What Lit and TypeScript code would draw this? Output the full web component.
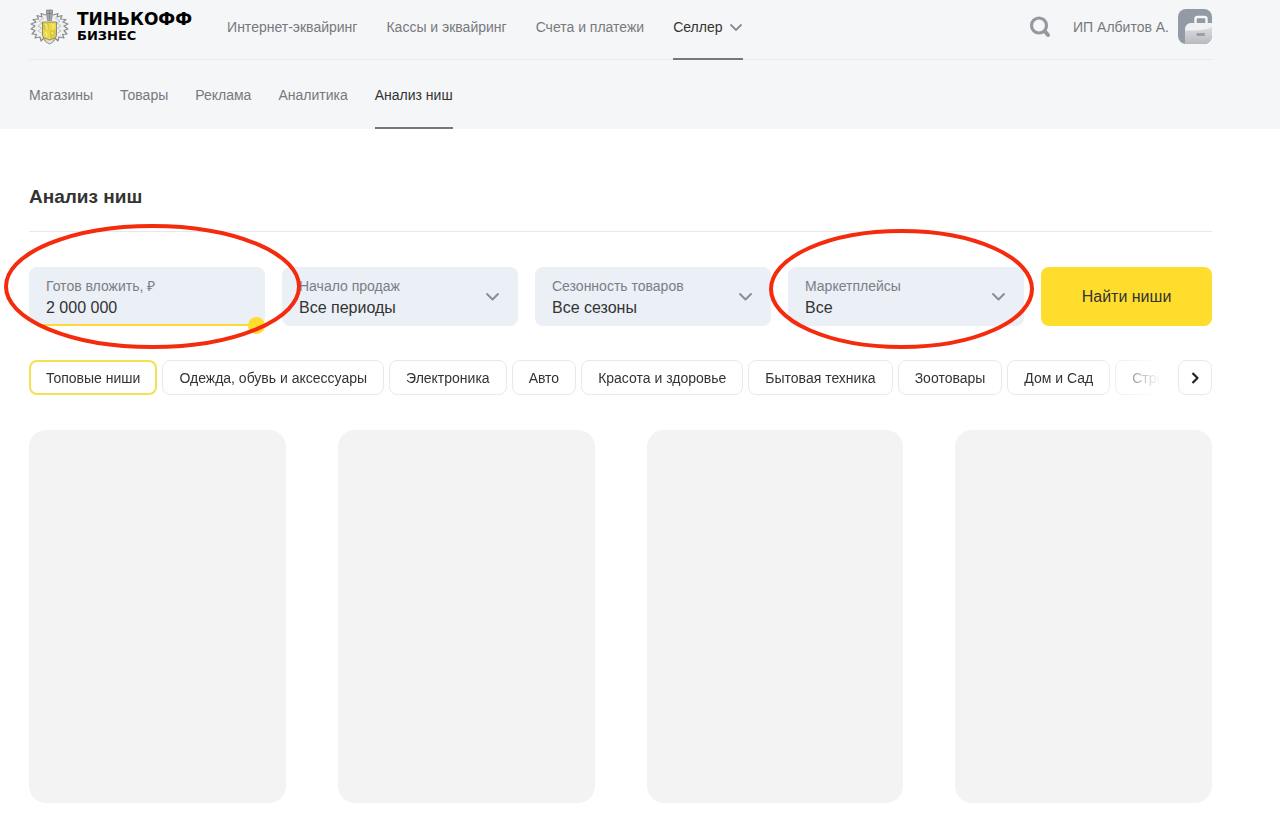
import { LitElement, html, css, svg } from "lit";
import { customElement, state } from "lit/decorators.js";
import { classMap } from "lit/directives/class-map.js";

const mainNav = ["Интернет-эквайринг", "Кассы и эквайринг", "Счета и платежи", "Селлер"];
const subNav = ["Магазины", "Товары", "Реклама", "Аналитика", "Анализ ниш"];
const categories = [
  "Топовые ниши",
  "Одежда, обувь и аксессуары",
  "Электроника",
  "Авто",
  "Красота и здоровье",
  "Бытовая техника",
  "Зоотовары",
  "Дом и Сад",
  "Строительство",
];
const filters = [
  { id: "start", label: "Начало продаж", value: "Все периоды", marked: false },
  { id: "season", label: "Сезонность товаров", value: "Все сезоны", marked: false },
  { id: "market", label: "Маркетплейсы", value: "Все", marked: true },
];

@customElement("brand-logo")
export class BrandLogo extends LitElement {
  static styles = css`
    :host {
      display: block;
    }
    .logo {
      display: flex;
      align-items: center;
      gap: 7px;
      color: #000;
      text-decoration: none;
    }
    .words {
      display: flex;
      flex-direction: column;
      font-family: "DejaVu Sans", sans-serif;
      font-weight: 700;
    }
    .name {
      font-size: 17px;
      line-height: 17px;
    }
    .unit {
      font-size: 13px;
      line-height: 15px;
    }
  `;

  render() {
    const wing = svg`
      <path d="M17 6 L12 4.500 L13 8 L8 6.500 L9.500 10 L4 10.500 L7 13 L2 15 L6 17 L2 20 L6 21.500 L3 25 L7.500 25.500 L6 29 L11 28 L12 32 L15 29"
        fill="#f0f0f1" stroke="#8a8c8f" stroke-width="1.200" stroke-linejoin="round" />
      <path d="M15 9 L10 12 L13 14 L9 17 L12.500 19 L9 22 L12.500 24"
        fill="none" stroke="#b4b6b9" stroke-width=".8" />
    `;
    return html`
      <a class="logo" href="#" aria-label="Тинькофф Бизнес">
        <svg width="41" height="36" viewBox="0 0 41 36" aria-hidden="true">
          ${wing}
          <g transform="translate(41 0) scale(-1 1)">${wing}</g>
          <path d="M17.500 1h6v3.500l-1 7h-4l-1-7z" fill="#a6a8ab" stroke="#808285" stroke-width=".8" />
          <path d="M20.500 1v9M18 4.500h5" stroke="#75777a" stroke-width=".7" />
          <path d="M14 29l3 4 3.500 2 3.500-2 3-4z" fill="#e3e4e5" stroke="#85878a" stroke-width=".9" />
          <path d="M13.500 13h14v13.500q0 2-2 2.500l-5 2-5-2q-2-.5-2-2.500z" fill="#ecd93f" stroke="#858068" stroke-width=".9" />
          <path d="M14 13.500h6v7h-6zM21 21.500h6v5l-6 3z" fill="#d9c845" />
          <path d="M16 15l2 1.500-1 2 2 1.500M22.500 15l2.500 2-1.500 3M16 23l2 2-1 3M22.500 23l2 2.500" fill="none" stroke="#f5eb9b" stroke-width="1.200" />
          <circle cx="16.500" cy="31.500" r="1" fill="#c9b548" />
          <circle cx="24.500" cy="31.500" r="1" fill="#c9b548" />
        </svg>
        <span class="words">
          <span class="name">ТИНЬКОФФ</span>
          <span class="unit">БИЗНЕС</span>
        </span>
      </a>
    `;
  }
}

@customElement("app-root")
export class AppRoot extends LitElement {
  static styles = css`
    :host {
      display: block;
      min-height: 100vh;
      background: #fff;
      color: #333;
      font-family: "Liberation Sans", Arial, sans-serif;
      font-size: 14px;
      line-height: 20px;
    }
    * {
      box-sizing: border-box;
    }
    button,
    input,
    select {
      font: inherit;
      color: inherit;
      margin: 0;
    }
    header {
      background: #f5f6f8;
      padding: 0 68px 0 29px;
    }
    .top {
      display: flex;
      height: 60px;
      border-bottom: 1px solid #eaebed;
    }
    .brand {
      margin: 9px 35px 0 0;
    }
    .nav {
      display: flex;
      gap: 27px;
    }
    .nav.main {
      gap: 29px;
    }
    .nav a {
      display: flex;
      gap: 6px;
      color: #77797d;
      text-decoration: none;
      white-space: nowrap;
    }
    .nav a.current {
      color: #333;
      border-bottom: 2px solid #75777b;
    }
    .main a {
      height: 60px;
      padding-top: 17px;
    }
    .main svg {
      margin-top: 3px;
    }
    .sub a {
      height: 69px;
      padding-top: 25px;
    }
    .account {
      display: flex;
      align-items: flex-start;
      margin-left: auto;
      padding-top: 9px;
      color: #77797d;
    }
    .icon-button {
      display: block;
      padding: 0;
      border: 0;
      background: none;
      cursor: pointer;
    }
    .search {
      margin: 7px 22px 0 0;
    }
    .user {
      margin: 8px 9px 0 0;
    }
    main {
      padding: 54px 68px 32px 29px;
    }
    h1 {
      margin: 0;
      padding-bottom: 20px;
      border-bottom: 1px solid #e7e8ea;
      font-size: 19px;
      line-height: 28px;
      font-weight: 700;
    }
    .filters {
      display: grid;
      grid-template-columns: repeat(4, 1fr) 171px;
      gap: 17px;
      margin-top: 35px;
    }
    .field {
      position: relative;
      display: grid;
      grid-template-columns: 1fr auto;
      align-content: start;
      align-items: center;
      height: 59px;
      padding: 9px 17px 0;
      border-radius: 8px;
      background: #ebeff6;
    }
    .field label {
      grid-column: 1;
      color: #7a7e86;
      line-height: 20px;
    }
    .field .value {
      grid-column: 1;
      width: 100%;
      height: 24px;
      padding: 0;
      border: 0;
      outline: 0;
      background: none;
      appearance: none;
      font-size: 16px;
      line-height: 24px;
    }
    .field .chevron {
      grid-column: 2;
      grid-row: 1 / 3;
    }
    .track {
      position: absolute;
      left: 8px;
      right: 8px;
      bottom: 0;
      height: 2px;
      background: #f9dc2d;
    }
    .thumb {
      position: absolute;
      right: 0;
      bottom: -8px;
      width: 17px;
      height: 17px;
      border-radius: 50%;
      background: #ffdd2d;
    }
    .mark {
      position: absolute;
      left: -26px;
      top: -44px;
      width: 299px;
      height: 127px;
      pointer-events: none;
      z-index: 1;
    }
    .mark.market {
      left: -20px;
      top: -39px;
      width: 267px;
      height: 122px;
    }
    .submit {
      border: 0;
      border-radius: 8px;
      background: #ffdd2d;
      font-size: 16px;
      cursor: pointer;
    }
    .categories {
      display: flex;
      gap: 17px;
      margin-top: 34px;
    }
    .chips {
      display: flex;
      flex: 1;
      gap: 5px;
      min-width: 0;
      overflow: hidden;
      mask-image: linear-gradient(to right, #000 calc(100% - 60px), transparent 100%);
    }
    .chip {
      flex: none;
      height: 35px;
      padding: 0 16px;
      border: 1px solid #e9e9eb;
      border-radius: 8px;
      background: #fff;
      white-space: nowrap;
      cursor: pointer;
    }
    .chip.selected {
      padding: 0 15px;
      border: 2px solid #f5e04f;
    }
    .next {
      display: grid;
      place-items: center;
      flex: none;
      width: 34px;
      height: 35px;
      padding: 0;
      border: 1px solid #e9e9eb;
      border-radius: 8px;
      background: #fff;
      cursor: pointer;
    }
    .cards {
      display: grid;
      grid-template-columns: repeat(4, 1fr);
      gap: 52px;
      margin-top: 35px;
    }
    .card {
      height: 373px;
      border-radius: 17px;
      background: #f3f3f3;
    }
  `;

  @state() private selected = 0;

  private chevron = html`
    <svg class="chevron" width="16" height="16" viewBox="0 0 16 16" fill="none" stroke="#8a8f98" stroke-width="2" stroke-linecap="round" stroke-linejoin="round" aria-hidden="true">
      <path d="M2 4 7.500 9.500 13 4" />
    </svg>
  `;

  private ellipse(kind: string, w: number, h: number) {
    return html`
      <svg class="mark ${kind}" viewBox="0 0 ${w} ${h}" aria-hidden="true">
        <ellipse cx=${w / 2} cy=${h / 2} rx=${w / 2 - 3} ry=${h / 2 - 3} fill="none" stroke="#f52b0d" stroke-width="4" />
      </svg>
    `;
  }

  render() {
    return html`
      <header>
        <div class="top">
          <brand-logo class="brand"></brand-logo>
          <nav class="nav main" aria-label="Разделы">
            ${mainNav.map((item, i) => {
              const current = i === mainNav.length - 1;
              return html`<a href="#" class=${classMap({ current })}>${item}${current
                ? html`<svg width="14" height="14" viewBox="0 0 14 14" fill="none" stroke="#8b8d91" stroke-width="1.800" stroke-linecap="round" stroke-linejoin="round" aria-hidden="true"><path d="M2 5 7 10 12 5" /></svg>`
                : ""}</a>`;
            })}
          </nav>
          <div class="account">
            <button class="icon-button search" aria-label="Поиск">
              <svg width="22" height="22" viewBox="0 0 22 22" fill="none" stroke="#94999f" aria-hidden="true">
                <circle cx="10" cy="9.500" r="7.500" stroke-width="3.200" />
                <path d="m16 15.500 3 3.500" stroke-width="4" stroke-linecap="round" />
              </svg>
            </button>
            <span class="user">ИП Албитов А.</span>
            <button class="icon-button" aria-label="Профиль">
              <svg width="34" height="35" viewBox="0 0 34 35" aria-hidden="true">
                <defs>
                  <linearGradient id="case" x1="0" y1="0" x2="0" y2="1">
                    <stop offset="0" stop-color="#e4e5e8" />
                    <stop offset="1" stop-color="#b7bac0" />
                  </linearGradient>
                  <clipPath id="tile"><rect width="34" height="35" rx="8" /></clipPath>
                </defs>
                <g clip-path="url(#tile)">
                  <rect width="34" height="35" fill="#929ba5" />
                  <path d="M17.500 15V10q0-2 2-2h7q2 0 2 2V15" fill="none" stroke="#f5f6f8" stroke-width="2.400" />
                  <path d="M7 35V21q0-7 7-7h20v21z" fill="url(#case)" />
                  <path d="M7 21.500q0-7.500 7-7.500h20v4q-6 3-15 3.500z" fill="#f0f1f3" />
                  <rect x="18.500" y="24" width="8.500" height="3" rx="1" fill="#9a9fa6" />
                </g>
              </svg>
            </button>
          </div>
        </div>
        <nav class="nav sub" aria-label="Селлер">
          ${subNav.map(
            (item, i) => html`<a href="#" class=${classMap({ current: i === subNav.length - 1 })}>${item}</a>`,
          )}
        </nav>
      </header>
      <main>
        <h1>Анализ ниш</h1>
        <form class="filters" @submit=${(e: Event) => e.preventDefault()}>
          <div class="field">
            <label for="budget">Готов вложить, ₽</label>
            <input class="value" id="budget" type="text" inputmode="numeric" value="2 000 000" />
            <span class="track"></span>
            <span class="thumb"></span>
            ${this.ellipse("budget", 299, 127)}
          </div>
          ${filters.map(
            (f) => html`
              <div class="field">
                <label for=${f.id}>${f.label}</label>
                <select class="value" id=${f.id}>
                  <option>${f.value}</option>
                </select>
                ${this.chevron} ${f.marked ? this.ellipse("market", 267, 122) : ""}
              </div>
            `,
          )}
          <button class="submit">Найти ниши</button>
        </form>
        <div class="categories">
          <div class="chips">
            ${categories.map(
              (name, i) => html`
                <button
                  class=${classMap({ chip: true, selected: this.selected === i })}
                  aria-pressed=${this.selected === i}
                  @click=${() => (this.selected = i)}
                >${name}</button>
              `,
            )}
          </div>
          <button class="next" aria-label="Вперёд">
            <svg width="14" height="14" viewBox="0 0 14 14" fill="none" stroke="#222" stroke-width="2.200" stroke-linejoin="round" aria-hidden="true">
              <path d="m4.500 2 5 5-5 5" />
            </svg>
          </button>
        </div>
        <section class="cards" aria-busy="true">
          ${[0, 1, 2, 3].map(() => html`<div class="card"></div>`)}
        </section>
      </main>
    `;
  }
}
